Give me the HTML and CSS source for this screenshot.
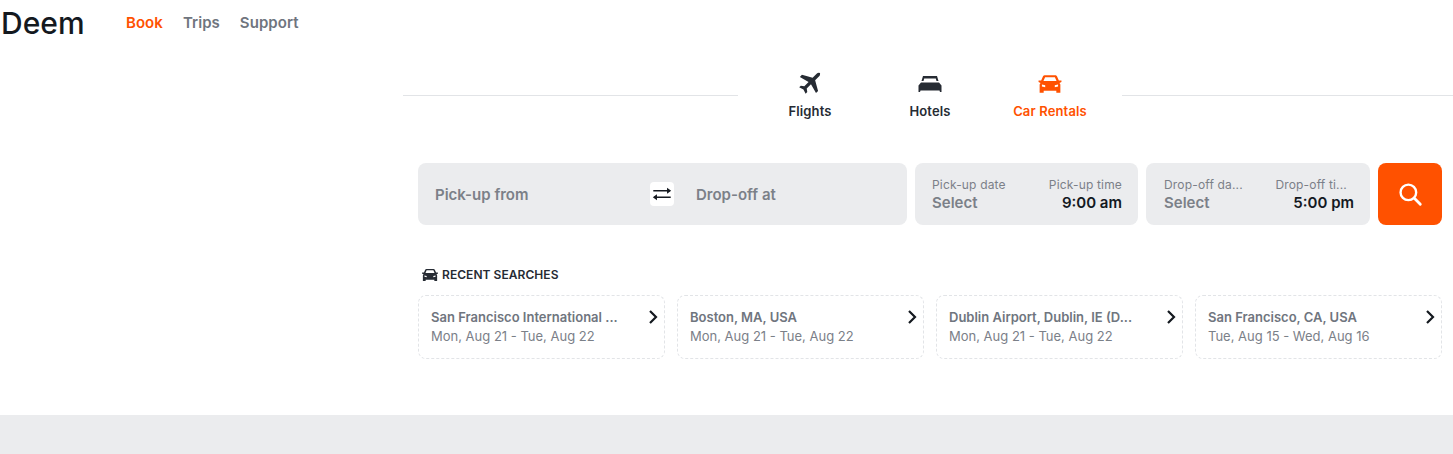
FILE: index.html
```html
<!DOCTYPE html>
<html lang="en">
<head>
  <meta charset="UTF-8" />
  <title>Deem</title>
  <link rel="stylesheet" href="styles.css">
</head>
<body>
  <header class="topnav">
    <a class="logo">Deem</a>
    <a class="nav-link active">Book</a>
    <a class="nav-link">Trips</a>
    <a class="nav-link">Support</a>
  </header>

  <main class="booking">
    <div class="tabs-row">
      <span class="tabs-line tabs-line-left"></span>
      <div class="tabs">
        <a class="tab">
          <svg class="tab-icon" viewBox="1 1 22 22"><path fill="currentColor" d="M21.600 2.400c-.9-.9-2.500-.8-3.500.2l-3.700 3.700L4.600 3.600 2.700 5.500l8 4.600-3.900 3.900-3.200-.5-1.500 1.500 3.900 2 2 3.900 1.500-1.500-.5-3.200 3.900-3.900 4.600 8 1.900-1.900-2.700-9.800 3.700-3.700c1-1 1.100-2.600.2-3.500z"/></svg>
          <span>Flights</span>
        </a>
        <a class="tab">
          <svg class="tab-icon" viewBox="0 0 24 24"><path fill="currentColor" d="M5 4h14l1.500 5h-2l-.7-2.500H6.200L5.500 9h-2zM3 10.500h18l2.500 3V20H22l-.5-1.500h-19L2 20H.5v-6.500z"/></svg>
          <span>Hotels</span>
        </a>
        <a class="tab active">
          <svg class="tab-icon" viewBox="1 1 22 22"><path fill="currentColor" fill-rule="evenodd" d="M7.200 4h9.600c.7 0 1.300.4 1.600 1l1.700 3.800h2.400v1.400l-1.800.8.800 1.500V20h-3.700v-1.800H6.200V20H2.500v-7.500l.8-1.500-1.800-.8V8.800h2.400L5.600 5c.3-.6.900-1 1.600-1zm.3 1.800L6 9.300h12l-1.500-3.500zM4.600 12.500v1.800l3 .6v-1.700zm14.800 0l-3 .7v1.700l3-.6z"/></svg>
          <span>Car Rentals</span>
        </a>
      </div>
      <span class="tabs-line"></span>
    </div>

    <div class="search-row">
      <div class="field field-places">
        <span class="place">Pick-up from</span>
        <span class="swap">
          <svg viewBox="0 0 24 24" width="22" height="22"><path fill="none" stroke="currentColor" stroke-width="1.800" d="M2.500 8.500h18M3.500 15.500h18"/><path fill="currentColor" d="M22 8.500l-4.500-3.200v6.400zM2 15.500l4.500-3.200v6.400z"/></svg>
        </span>
        <span class="place">Drop-off at</span>
      </div>
      <div class="field field-dates">
        <div class="date-col">
          <span class="mini">Pick-up date</span>
          <span class="value">Select</span>
        </div>
        <div class="date-col time-col">
          <span class="mini">Pick-up time</span>
          <span class="value strong">9:00 am</span>
        </div>
      </div>
      <div class="field field-dates field-dropoff">
        <div class="date-col">
          <span class="mini">Drop-off da...</span>
          <span class="value">Select</span>
        </div>
        <div class="date-col time-col">
          <span class="mini mini-cut">Drop-off ti...</span>
          <span class="value strong">5:00 pm</span>
        </div>
      </div>
      <button class="search-btn">
        <svg viewBox="0 0 24 24" width="26" height="26"><circle cx="10.500" cy="10.500" r="7.200" fill="none" stroke="currentColor" stroke-width="2.200"/><path d="M16 16l5.500 5.500" stroke="currentColor" stroke-width="2.600" stroke-linecap="round"/></svg>
      </button>
    </div>

    <div class="recent">
      <h2 class="recent-title">
        <svg viewBox="0 0 24 24" width="18" height="18"><path fill="currentColor" fill-rule="evenodd" d="M7.200 4h9.600c.7 0 1.300.4 1.600 1l1.700 3.800h2.400v1.400l-1.800.8.800 1.500V20h-3.700v-1.800H6.200V20H2.500v-7.500l.8-1.500-1.800-.8V8.800h2.400L5.600 5c.3-.6.900-1 1.600-1zm.3 1.800L6 9.300h12l-1.500-3.500zM4.600 12.500v1.800l3 .6v-1.700zm14.800 0l-3 .7v1.700l3-.6z"/></svg>
        RECENT SEARCHES
      </h2>
      <div class="recent-grid">
        <a class="recent-card">
          <div class="recent-text">
            <span class="recent-place">San Francisco International ...</span>
            <span class="recent-dates">Mon, Aug 21 - Tue, Aug 22</span>
          </div>
          <svg class="chevron" viewBox="0 0 10 16"><path fill="none" stroke="currentColor" stroke-width="2.200" d="M2 2l6 6-6 6"/></svg>
        </a>
        <a class="recent-card">
          <div class="recent-text">
            <span class="recent-place">Boston, MA, USA</span>
            <span class="recent-dates">Mon, Aug 21 - Tue, Aug 22</span>
          </div>
          <svg class="chevron" viewBox="0 0 10 16"><path fill="none" stroke="currentColor" stroke-width="2.200" d="M2 2l6 6-6 6"/></svg>
        </a>
        <a class="recent-card">
          <div class="recent-text">
            <span class="recent-place">Dublin Airport, Dublin, IE (D...</span>
            <span class="recent-dates">Mon, Aug 21 - Tue, Aug 22</span>
          </div>
          <svg class="chevron" viewBox="0 0 10 16"><path fill="none" stroke="currentColor" stroke-width="2.200" d="M2 2l6 6-6 6"/></svg>
        </a>
        <a class="recent-card">
          <div class="recent-text">
            <span class="recent-place">San Francisco, CA, USA</span>
            <span class="recent-dates">Tue, Aug 15 - Wed, Aug 16</span>
          </div>
          <svg class="chevron" viewBox="0 0 10 16"><path fill="none" stroke="currentColor" stroke-width="2.200" d="M2 2l6 6-6 6"/></svg>
        </a>
      </div>
    </div>
  </main>

  <footer class="footer-band"></footer>
</body>
</html>
```

FILE: styles.css
```css
* {
  margin: 0;
  padding: 0;
  box-sizing: border-box;
  font-family: 'Inter', sans-serif;
}

body {
  background-color: #ffffff;
  color: #14191f;
  height: 454px;
  overflow: hidden;
}

.topnav {
  display: flex;
  align-items: center;
  height: 45px;
  padding-left: 1px;
}

.logo {
  font-size: 30px;
  font-weight: 500;
  color: #14191f;
  width: 125px;
}

.nav-link {
  font-size: 15px;
  font-weight: 600;
  letter-spacing: 0.05px;
  color: #6f757e;
  margin-right: 20px;
}

.nav-link.active {
  color: #ff5100;
}

.booking {
  padding-left: 403px;
  height: 370px;
}

.tabs-row {
  display: flex;
  align-items: flex-start;
  height: 118px;
}

.tabs-line {
  flex: 1;
  border-top: 1px solid #e2e4e7;
  margin-top: 50px;
}

.tabs-line-left {
  flex: none;
  width: 335px;
}

.tabs {
  display: flex;
  width: 384px;
  padding: 27px 12px 0;
}

.tab {
  display: flex;
  flex-direction: column;
  align-items: center;
  width: 120px;
  font-size: 13px;
  font-weight: 600;
  letter-spacing: 0.15px;
  gap: 7px;
  color: #262b33;
}

.tab.active {
  color: #ff5100;
}

.tab-icon {
  width: 24px;
  height: 24px;
}

.search-row {
  display: flex;
  gap: 8px;
  margin-left: 15px;
  margin-right: 11px;
  height: 62px;
}

.field {
  background-color: #ebecee;
  border-radius: 8px;
  display: flex;
  align-items: center;
}

.field-places {
  width: 489px;
  padding-left: 17px;
}

.place {
  font-size: 15px;
  font-weight: 600;
  color: #7b8088;
}

.place:first-child {
  width: 215px;
}

.swap {
  display: flex;
  align-items: center;
  justify-content: center;
  width: 24px;
  height: 24px;
  background-color: #ffffff;
  border-radius: 4px;
  color: #14191f;
  margin-right: 22px;
}

.field-dates {
  width: 223px;
  justify-content: space-between;
  padding: 0 16px 0 17px;
}

.field-dropoff {
  width: 224px;
  padding-left: 18px;
}

.date-col {
  display: flex;
  flex-direction: column;
  gap: 1px;
}

.time-col {
  align-items: flex-end;
}

.mini {
  font-size: 12px;
  line-height: 16px;
  letter-spacing: 0.17px;
  color: #7b8088;
  white-space: nowrap;
}

.mini-cut {
  margin-right: 7px;
}

.value {
  font-size: 15px;
  line-height: 18px;
  font-weight: 600;
  color: #7b8088;
}

.value.strong {
  color: #14191f;
}

.search-btn {
  width: 64px;
  background-color: #ff5100;
  border: none;
  border-radius: 8px;
  color: #ffffff;
  display: flex;
  align-items: center;
  justify-content: center;
}

.recent {
  margin-left: 15px;
  margin-right: 11px;
  padding-top: 41px;
}

.recent-title {
  display: flex;
  align-items: center;
  gap: 3px;
  font-size: 12px;
  font-weight: 600;
  line-height: 16px;
  letter-spacing: 0.05px;
  color: #262b33;
  padding-left: 3px;
  margin-bottom: 11px;
}

.recent-grid {
  display: grid;
  grid-template-columns: repeat(4, 1fr);
  gap: 12px;
}

.recent-card {
  display: flex;
  justify-content: space-between;
  height: 64px;
  padding: 13px 6px 0 12px;
  border: 1px dashed #e2e4e7;
  border-radius: 8px;
}

.recent-text {
  display: flex;
  flex-direction: column;
  gap: 2px;
}

.recent-place {
  font-size: 13px;
  line-height: 17px;
  font-weight: 600;
  color: #6f757e;
  white-space: nowrap;
}

.recent-dates {
  font-size: 13px;
  line-height: 17px;
  color: #7b8088;
  white-space: nowrap;
}

.chevron {
  width: 10px;
  height: 16px;
  color: #14191f;
}

.footer-band {
  height: 39px;
  background-color: #ebecee;
}
```
